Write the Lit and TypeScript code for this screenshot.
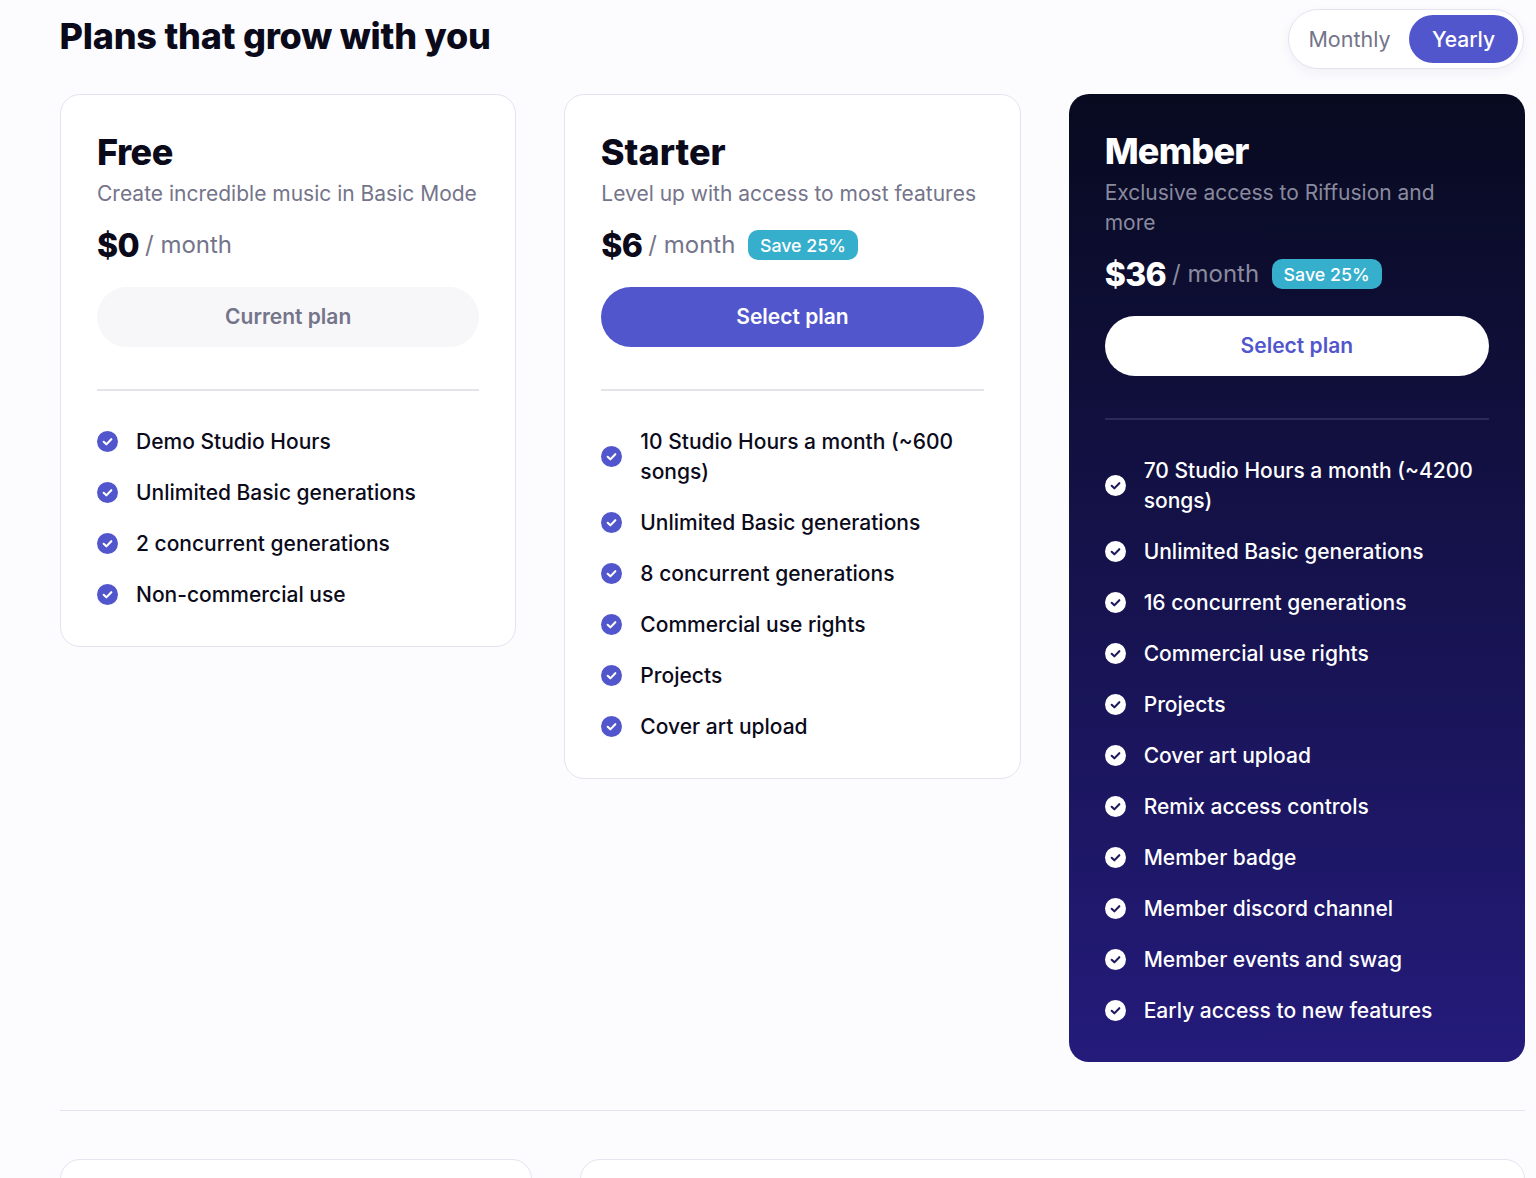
import { LitElement, html, css, svg } from "lit";
import { customElement } from "lit/decorators.js";

type Plan = { name: string; sub: string; price: string; save: boolean; cta: string; kind: string; features: string[] };

const plans: Plan[] = [
  { name: "Free", sub: "Create incredible music in Basic Mode", price: "$0", save: false, cta: "Current plan", kind: "free",
    features: ["Demo Studio Hours", "Unlimited Basic generations", "2 concurrent generations", "Non-commercial use"] },
  { name: "Starter", sub: "Level up with access to most features", price: "$6", save: true, cta: "Select plan", kind: "starter",
    features: ["10 Studio Hours a month (~600 songs)", "Unlimited Basic generations", "8 concurrent generations", "Commercial use rights", "Projects", "Cover art upload"] },
  { name: "Member", sub: "Exclusive access to Riffusion and more", price: "$36", save: true, cta: "Select plan", kind: "member",
    features: ["70 Studio Hours a month (~4200 songs)", "Unlimited Basic generations", "16 concurrent generations", "Commercial use rights", "Projects", "Cover art upload", "Remix access controls", "Member badge", "Member discord channel", "Member events and swag", "Early access to new features"] },
];

const check = svg`<svg class="check" viewBox="0 0 22 22" width="21" height="21" aria-hidden="true"><circle class="disc" cx="11" cy="11" r="11"/><path class="tick" d="M7 11.3l2.8 2.7L15 8.6" fill="none" stroke-width="2.2" stroke-linecap="round" stroke-linejoin="round"/></svg>`;

@customElement("app-root")
export class AppRoot extends LitElement {
  static styles = css`
    :host { display: block; height: 1178px; overflow: hidden; background: #fcfcff; font-family: Inter, "Noto Sans", sans-serif; color: #0b0a1a; }
    * { box-sizing: border-box; }
    .page { padding: 9px 11px 0 60px; }
    .head { display: flex; justify-content: space-between; align-items: flex-start; height: 60px; margin-bottom: 25px; }
    h1 { margin: 3px 0 0 -0.5px; font-size: 36px; line-height: 48px; font-weight: 800; letter-spacing: -0.006em; color: #0b0a1a; }
    .toggle { display: flex; align-items: center; width: 236px; height: 60px; margin-right: 1px; padding: 5px; background: #fff; border: 1px solid #e4e3ef; border-radius: 30px; box-shadow: 0 4px 12px rgba(30, 30, 80, .05); font-size: 21.5px; font-weight: 400; }
    .toggle span { display: flex; align-items: center; justify-content: center; height: 48px; border-radius: 24px; }
    .toggle .off { width: 111px; margin-right: 4px; color: #74748a; }
    .toggle .on { width: 109px; background: #5256cc; color: #fff; font-weight: 500; font-size: 21px; }
    .cards { display: grid; grid-template-columns: repeat(3, 1fr); gap: 48px; align-items: start; }
    .card { background: #fff; border: 1px solid #e4e3ef; border-radius: 20px; padding: 36px; }
    .card.member { border: 0; background: linear-gradient(180deg, #070a1f 0%, #241b7b 100%); color: #fff; }
    h2 { margin: -1px 0 0; font-size: 36px; line-height: 44px; font-weight: 800; letter-spacing: -0.015em; }
    .starter h2 { letter-spacing: 0; margin-left: -0.5px; }
    .member h2 { letter-spacing: -0.022em; }
    .sub { margin-top: 5px; font-size: 21px; line-height: 30px; color: #74748a; }
    .member .sub { color: #8a8a9e; }
    .price { display: flex; align-items: center; margin-top: 16px; height: 40px; }
    .amt { font-size: 32px; font-weight: 800; letter-spacing: -0.02em; }
    .per { margin: 0 0 2px 6px; font-size: 24px; color: #74748a; }
    .member .per { color: #8a8a9e; }
    .save { margin-left: 13px; height: 30px; padding: 0 12.5px 0 11.5px; display: flex; align-items: center; border-radius: 10px; background: #36afcd; color: #fff; font-size: 17.8px; font-weight: 500; }
    .cta { display: flex; align-items: center; justify-content: center; margin-top: 22px; height: 60px; padding-bottom: 2px; border-radius: 30px; font-size: 21px; font-weight: 600; }
    .free .cta { background: #f7f7f9; color: #74748a; }
    .starter .cta { background: #5256cc; color: #fff; }
    .member .cta { background: #fff; color: #5256cc; }
    hr { margin: 42px 0 36px; border: 0; border-top: 2px solid #e4e3ea; }
    .member hr { border-top-color: #2c2a58; }
    ul { list-style: none; margin: 0; padding: 0; display: flex; flex-direction: column; gap: 21px; }
    li { display: flex; align-items: center; gap: 18px; font-size: 21px; font-weight: 500; line-height: 30px; }
    .check { flex: none; margin-bottom: 2px; }
    .disc { fill: #5256cc; }
    .tick { stroke: #fff; }
    .member .disc { fill: #fff; }
    .member .tick { stroke: #1d1a5c; }
    .rule { margin-top: 48px; border-top: 1px solid #e4e3ef; }
    .bottom { display: grid; grid-template-columns: 472px 1fr; gap: 48px; margin-top: 48px; }
    .stub { height: 80px; background: #fff; border: 1px solid #e4e3ef; border-radius: 20px; }
  `;

  render() {
    return html`<div class="page">
      <div class="head">
        <h1>Plans that grow with you</h1>
        <div class="toggle"><span class="off">Monthly</span><span class="on">Yearly</span></div>
      </div>
      <div class="cards">
        ${plans.map((p) => html`<section class="card ${p.kind}">
          <h2>${p.name}</h2>
          <div class="sub">${p.sub}</div>
          <div class="price">
            <span class="amt">${p.price}</span><span class="per">/ month</span>
            ${p.save ? html`<span class="save">Save 25%</span>` : ""}
          </div>
          <div class="cta">${p.cta}</div>
          <hr />
          <ul>${p.features.map((f) => html`<li>${check}<span>${f}</span></li>`)}</ul>
        </section>`)}
      </div>
      <div class="rule"></div>
      <div class="bottom"><div class="stub"></div><div class="stub"></div></div>
    </div>`;
  }
}
